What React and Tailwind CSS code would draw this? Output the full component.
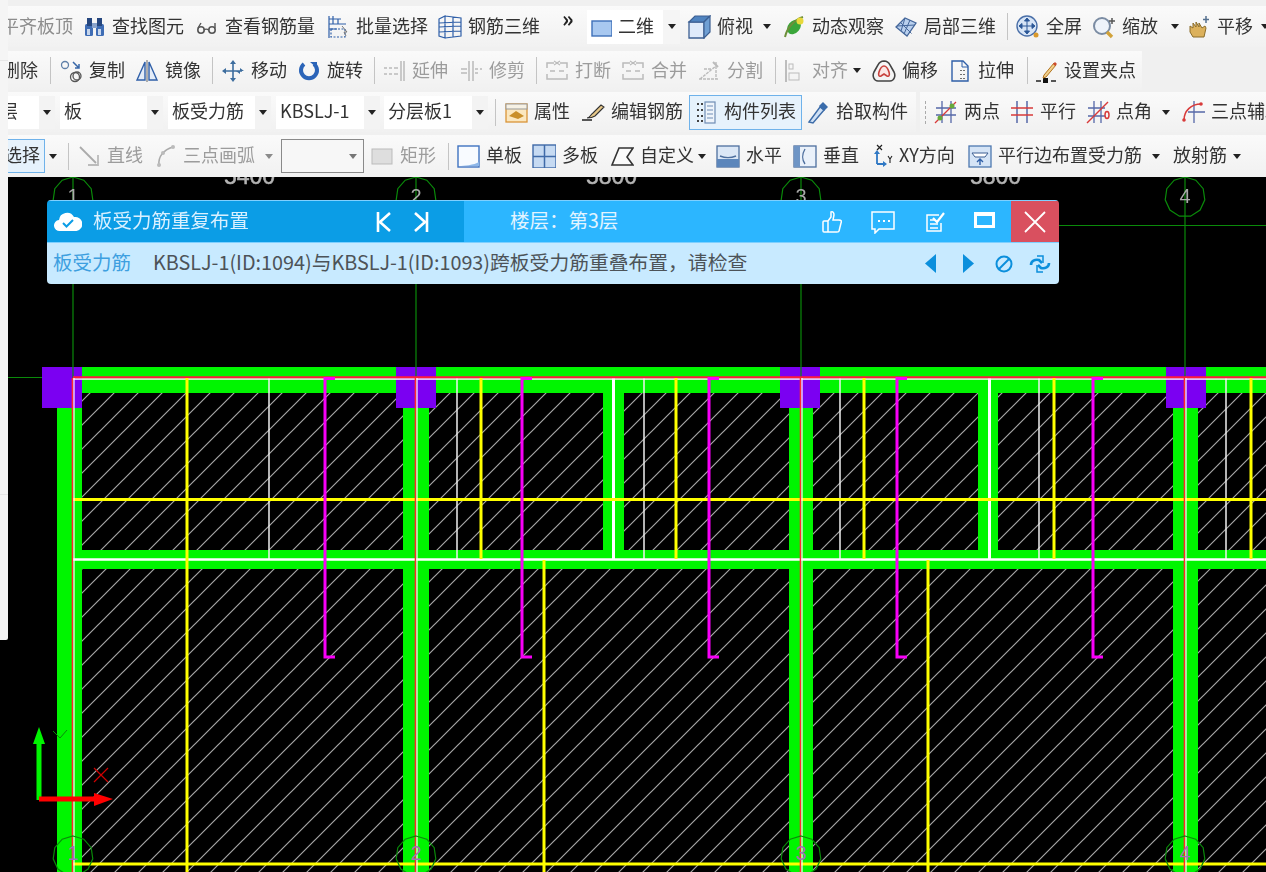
import React from "react";

const B = "#2f5fa8";
const S = ({ children }) => (
  <svg viewBox="0 0 24 24" className="w-6 h-6 shrink-0" fill="none">{children}</svg>
);

const I = {
  binoc: <S><rect x="3" y="9" width="8" height="12" rx="1.5" fill="#3f6db5" /><rect x="14" y="9" width="8" height="12" rx="1.5" fill="#3f6db5" /><rect x="5" y="3" width="5" height="8" fill="#26477f" /><rect x="15" y="3" width="5" height="8" fill="#26477f" /><rect x="10" y="8" width="5" height="5" fill="#8aa4cc" /><rect x="5" y="14" width="3" height="6" fill="#c7d6ec" /><rect x="16" y="14" width="3" height="6" fill="#c7d6ec" /></S>,
  glasses: <S><circle cx="6" cy="15" r="3.2" stroke="#555" strokeWidth="1.6" /><circle cx="17" cy="15" r="3.2" stroke="#555" strokeWidth="1.6" /><path d="M9 15c1-1 3-1 5 0M3 13 6 8M20 13V8" stroke="#555" strokeWidth="1.4" /></S>,
  batch: <S><path d="M3 1v22M3 4h12M3 9h17M3 14h8M7 1v8M12 4v5" stroke={B} strokeWidth="1.2" /><rect x="5" y="14" width="14" height="8" stroke={B} strokeWidth="1.2" strokeDasharray="2 1.5" /><path d="m16 11 5 6-3 0 2 4" stroke="#777" strokeWidth="1" /></S>,
  rebar3d: <S><path d="M1 4 7 1v22l-6-2V4ZM7 1l16 2v18L7 23M15 2v20M1 12l22-1M1 8l22-1M1 17l22-1" stroke={B} strokeWidth="1.2" /></S>,
  square2d: <S><rect x="4" y="6" width="20" height="15" fill="#a8c8f0" stroke="#3e6fb8" strokeWidth="1.4" /></S>,
  cube: <S><path d="M2 7h15v16H2z" fill="#dfeafa" stroke="#3c5f92" strokeWidth="1.3" /><path d="M2 7 8 1h15L17 7H2Z" fill="#4f83bf" stroke="#3c5f92" strokeWidth="1.2" /><path d="M17 7l6-6v16l-6 6V7Z" fill="#6f9fd4" stroke="#3c5f92" strokeWidth="1.2" /></S>,
  orbit: <S><ellipse cx="12" cy="12" rx="6" ry="8" transform="rotate(40 12 12)" fill="#3aa63a" /><path d="M3 22C5 13 12 5 21 2" stroke="#6d8f3a" strokeWidth="2" /><circle cx="18" cy="6" r="3.5" fill="#e8d83a" /></S>,
  local3d: <S><path d="m2 12 9-9 11 5-9 13L2 12Z" fill="#b9d0ee" stroke="#44669a" strokeWidth="1.3" /><path d="m6.500 7.500 11 11M11 3 7 16M16 5l-6 14M3 11l18-1" stroke="#44669a" strokeWidth="1" /></S>,
  full: <S><circle cx="11" cy="11" r="10" fill="#d6e4f6" stroke="#4a6fa8" strokeWidth="1.4" /><path d="M11 4v14M4 11h14M11 3 8.500 6h5L11 3Zm0 16-2.500-3h5L11 19ZM3 11l3-2.500v5L3 11Zm16 0-3-2.500v5l3-2.500Z" fill="#2b5797" stroke="#2b5797" strokeWidth="1" /><circle cx="20" cy="20" r="2.500" fill="#d9992c" /></S>,
  zoom: <S><circle cx="10" cy="11" r="8" fill="#eef3fa" stroke="#7b8ca3" strokeWidth="2" /><path d="m15 17 5 5" stroke="#d1a23a" strokeWidth="3.400" /><path d="M20 3v6M17 6h6" stroke="#555" strokeWidth="1.500" /></S>,
  pan: <S><path d="M3 17V11l3 2V8l3 4V7l3 5V8l3 5 3-2 1 2-2 9H6l-3-5Z" fill="#dcb15c" stroke="#8b6d2a" strokeWidth="1" /><path d="M19 1v7M16 4.500h6" stroke="#55708f" strokeWidth="1.500" /></S>,
  copy: <S><circle cx="6" cy="6" r="3.500" stroke="#5f7fa8" strokeWidth="1.300" /><circle cx="16" cy="18" r="4.500" stroke="#555" strokeWidth="1.300" /><circle cx="18" cy="17" r="4" stroke="#555" strokeWidth="1.300" /><path d="m14 3 6 6M20 5v4h-4" stroke="#3867a8" strokeWidth="1.500" /></S>,
  mirror: <S><path d="M10 3 2 21h8V3ZM14 3l8 18h-8V3Z" stroke={B} strokeWidth="1.400" fill="#e3ecf8" /><path d="M12 1v22" stroke="#666" strokeWidth="1" /></S>,
  move: <S><path d="M12 3v18M3 12h18" stroke="#3d6d9e" strokeWidth="1.600" /><path d="m12 1-3 4h6l-3-4Zm0 22-3-4h6l-3 4ZM1 12l4-3v6l-4-3Zm22 0-4-3v6l-4-3Z" fill="#3d6d9e" /></S>,
  rotate: <S><path d="M7 5a8 8 0 1 0 10 0" stroke="#2b64b8" strokeWidth="4" /><path d="M13 3h7v6" fill="#2b64b8" /></S>,
  extend: <S><path d="M2 9h3M7 9h3M12 9h4M2 15h3M7 15h3M12 15h4" stroke="#bbb" strokeWidth="1.500" /><path d="M19 2v20M22 2v20" stroke="#bbb" strokeWidth="1.500" /></S>,
  trim: <S><path d="M10 2v20M14 2v20" stroke="#bbb" strokeWidth="1.500" /><path d="M2 10h6M2 14h6M16 10h3M16 14h3M21 10h2" stroke="#bbb" strokeWidth="1.500" /></S>,
  brk: <S><path d="M2 9V4h7M22 9V4h-7M2 15v5h20v-5M5 12h5M14 12h5" stroke="#bbb" strokeWidth="1.500" /><path d="M9 2l3 2-3 2M15 2l-3 2 3 2" stroke="#bbb" strokeWidth="1.200" /></S>,
  split: <S><path d="M2 20h20M3 20 19 7M7 10h8M19 3v17" stroke="#bbb" strokeWidth="1.400" strokeDasharray="3 1" /><path d="m16 3 5 5" stroke="#bbb" strokeWidth="2" /></S>,
  align: <S><path d="M4 1v22" stroke="#aaa" strokeWidth="1.500" /><rect x="7" y="5" width="4" height="5" stroke="#bbb" /><rect x="7" y="14" width="10" height="7" stroke="#bbb" /></S>,
  offset: <S><path d="M12 2a7 7 0 0 1 6 4l4 7c2 4 0 9-4 9H6c-4 0-6-5-4-9l4-7a7 7 0 0 1 6-4Z" stroke="#444" strokeWidth="1.600" /><path d="M12 7c3 0 4 3 5 6s0 5-2 4l-3-2-3 2c-2 1-3-1-2-4s2-6 5-6Z" stroke="#c8413c" strokeWidth="1.600" fill="#fbe8e6" /></S>,
  stretch: <S><path d="M4 2h11l5 5v15H4V2Z" stroke={B} strokeWidth="1.400" /><path d="M14 2v6h6" stroke={B} strokeWidth="1" /><path d="M13 11v1M16 11v1M13 15v1M16 15v1M13 19v1M16 19v1" stroke="#444" strokeWidth="1.500" /></S>,
  grip: <S><path d="M2 22h5M17 22h5" stroke="#222" strokeWidth="1.500" /><rect x="9" y="19" width="5" height="5" fill="#111" /><path d="M10 16 20 4l2 2-10 12-3 1 1-3Z" fill="#f1d08c" stroke="#b2741f" strokeWidth="1" /><path d="m19 5 2-2 2 2-2 2" fill="#cc4b2e" /></S>,
  prop: <S><rect x="2" y="4" width="21" height="18" fill="#fbe7bf" stroke="#d99438" strokeWidth="1.300" /><rect x="2" y="4" width="21" height="5" fill="#f6f1e4" stroke="#999" strokeWidth="1" /><path d="m5 16 7-5 8 5-6 3-9-3Z" fill="#c98f2a" /></S>,
  editbar: <S><path d="M1 20h10" stroke="#222" strokeWidth="1.500" /><path d="M6 18c3 0 3-3 6-5l8-8 3 2-9 9c-3 2-5 2-8 2Z" fill="#e7c889" stroke="#333" strokeWidth="1.100" /></S>,
  list: <S><rect x="11" y="2" width="10" height="21" fill="#eef4fb" stroke="#6f8db5" strokeWidth="1.200" /><path d="M13 6h6M13 10h6M13 14h6M13 18h6" stroke="#6f8db5" /><path d="M3 4h2M7 4h2M3 10h2M7 10h2M3 16h2M7 16h2M3 21h2M7 21h2" stroke="#444" strokeWidth="1.800" /></S>,
  pick: <S><path d="M3 22 14 7l4 3L7 23l-4-1Z" fill="#cfe0f5" stroke="#3d6ca8" strokeWidth="1.400" /><path d="m13 6 4-4 5 5-4 4-5-5Z" fill="#3a6cab" /></S>,
  twopt: <S><path d="M8 1v22M17 1v22M2 8h20M2 15h20" stroke="#5668a8" strokeWidth="1.300" /><path d="M1 23 22 2" stroke="#d83a3a" strokeWidth="1.300" /><circle cx="6" cy="18" r="2.500" fill="#66a83a" /><circle cx="18" cy="6" r="2.500" fill="#66a83a" /></S>,
  parallel: <S><path d="M7 1v22M17 1v22" stroke="#5668a8" strokeWidth="1.500" /><path d="M1 8h22M1 15h22" stroke="#d83a3a" strokeWidth="1.500" /></S>,
  angle: <S><path d="M8 1v22M15 1v22M2 8h17M2 16h17" stroke="#5668a8" strokeWidth="1.300" /><path d="M1 23 22 2" stroke="#d83a3a" strokeWidth="1.500" /><ellipse cx="21" cy="15" rx="2" ry="3.500" stroke="#d83a3a" strokeWidth="1.500" /></S>,
  arc3: <S><path d="M13 1v22M7 12h17" stroke="#5668a8" strokeWidth="1.300" /><path d="M3 20C3 11 10 4 20 4" stroke="#d83a3a" strokeWidth="1.500" /><circle cx="3" cy="20" r="1.800" fill="#d83a3a" /><circle cx="20" cy="4" r="1.800" fill="#d83a3a" /></S>,
  line: <S><path d="m3 3 16 16" stroke="#aaa" strokeWidth="1.800" /><path d="M21 11v10H11" stroke="#bbb" strokeWidth="1.800" /></S>,
  arc: <S><path d="M6 21C5 13 10 6 20 3" stroke="#aaa" strokeWidth="1.600" /><circle cx="6" cy="21" r="2" fill="#bbb" /><circle cx="20" cy="3" r="2" fill="#bbb" /><circle cx="10" cy="9" r="2" fill="#bbb" /></S>,
  rect: <S><rect x="2" y="5" width="20" height="15" fill="#dedede" stroke="#bbb" /></S>,
  single: <S><rect x="2" y="2" width="21" height="21" fill="#f8fbff" stroke="#3f73c0" strokeWidth="1.400" /><path d="M3 22h20V18C18 21 8 22 3 22Z" fill="#8eb7e8" /></S>,
  multi: <S><rect x="1" y="1" width="23" height="23" fill="#c6daf2" stroke="#3f6aa8" strokeWidth="1.400" /><path d="M12.500 1v23M1 12.500h23" stroke="#3f6aa8" strokeWidth="1.500" /></S>,
  custom: <S><path d="M23 4H9L2 21h21l-6-8 6-9Z" stroke="#333" strokeWidth="1.600" fill="#fafafa" /></S>,
  horiz: <S><rect x="1" y="2" width="22" height="21" fill="#dbe7f6" stroke="#4e6f9e" strokeWidth="1.300" /><rect x="1" y="15" width="22" height="8" fill="#5c86bb" /><path d="M4 12c5 2 11 2 16 0" stroke="#4e6f9e" strokeWidth="1.400" /></S>,
  vert: <S><rect x="1" y="2" width="22" height="21" fill="#eaf1fa" stroke="#4e6f9e" strokeWidth="1.300" /><rect x="1" y="2" width="6" height="21" fill="#6f95c5" /><path d="M12 5C9 10 9 16 12 20" stroke="#4e6f9e" strokeWidth="1.400" /></S>,
  xy: <S><path d="M8 8v12M8 20h8" stroke="#2f78c4" strokeWidth="1.800" /><path d="m8 6-3 4h6L8 6Zm10 14-4-3v6l4-3Z" fill="#2f78c4" /><path d="m8 1 5 5M13 1 8 6" stroke="#222" strokeWidth="1.200" /><path d="m19 12 2 3 2-3M21 15v4" stroke="#222" strokeWidth="1.100" /></S>,
  paraEdge: <S><rect x="1" y="2" width="22" height="21" fill="#d5e4f6" stroke="#4e78b0" strokeWidth="1.300" /><path d="M4 9h16l-3 4H7L4 9Z" fill="#fff" stroke="#3d5f92" /><path d="M12 21v-6M9 18l3-3 3 3" stroke="#2f5fa8" strokeWidth="1.400" /></S>,
};

const Caret = ({ ml = "" }) => (
  <svg viewBox="0 0 8 5" className={`w-2 h-[5px] shrink-0 ${ml}`}><path d="M0 0h8L4 5z" fill="#222" /></svg>
);
const Sep = ({ ml }) => <div className={`w-px h-[27px] shrink-0 bg-[#c4c4c4] ${ml}`} />;

const T = ({ ml, icon, text, gray, tw = "" }) => (
  <div className={`flex items-center shrink-0 ${ml}`}>
    {icon}
    <span className={`ml-[6px] pb-[4px] shrink-0 ${tw} ${gray ? "text-[#9c9c9c]" : "text-[#333]"}`}>{text}</span>
  </div>
);

const Sel = ({ ml, w, text, clip }) => (
  <div className={`flex items-stretch h-[33px] bg-white shrink-0 overflow-hidden ${ml} ${w}`}>
    <span className={`flex-1 self-center pb-[4px] whitespace-nowrap text-[#333] ${clip ? "-ml-[8px]" : "ml-[4px]"}`}>{text}</span>
    <div className="w-[16px] bg-[#f3f3f3] flex items-center justify-center"><Caret /></div>
  </div>
);

const rowCls =
  "flex items-center overflow-hidden whitespace-nowrap text-[18px] leading-none bg-linear-to-b from-[#fafafa] to-[#f1f1f1]";

function Toolbar() {
  return (
    <div className="h-[177px] bg-[#f0f0f0] flex flex-col shrink-0 blur-[0.45px] font-['Noto_Sans_CJK_SC','Noto_Sans',sans-serif]">
      <div className={`${rowCls} mt-[6px] h-[41px]`}>
        <span className="-ml-[7px] pb-[4px] text-[#8d8d8d] shrink-0">平齐板顶</span>
        <T ml="ml-[9px]" icon={I.binoc} text="查找图元" />
        <T ml="ml-[11px]" icon={I.glasses} text="查看钢筋量" />
        <T ml="ml-[11px]" icon={I.batch} text="批量选择" />
        <T ml="ml-[10px]" icon={I.rebar3d} text="钢筋三维" />
        <span className="ml-[22px] w-[13px] shrink-0 -mt-[20px] text-[22px] font-bold text-[#222]">»</span>
        <div className="ml-[12px] w-[93px] h-[34px] shrink-0 bg-white flex items-center">
          <div className="ml-px">{I.square2d}</div>
          <span className="ml-[6px] pb-[4px] text-[#333]">二维</span>
          <div className="ml-[9px] w-[18px] h-full bg-[#f5f5f5] flex items-center justify-center"><Caret /></div>
        </div>
        <T ml="ml-[7px]" icon={I.cube} text="俯视" />
        <Caret ml="ml-[10px]" />
        <T ml="ml-[11px]" icon={I.orbit} text="动态观察" />
        <T ml="ml-[10px]" icon={I.local3d} text="局部三维" />
        <Sep ml="ml-[11px]" />
        <T ml="ml-[8px]" icon={I.full} text="全屏" />
        <T ml="ml-[10px]" icon={I.zoom} text="缩放" />
        <Caret ml="ml-[13px]" />
        <T ml="ml-[8px]" icon={I.pan} text="平移" />
        <Caret ml="ml-[8px]" />
      </div>

      <div className={`${rowCls} mt-[4px] h-[39px] w-[1134px]`}>
        <span className="-ml-[6px] pb-[4px] text-[#333] shrink-0">删除</span>
        <Sep ml="ml-[12px]" />
        <T ml="ml-[8px]" icon={I.copy} text="复制" />
        <T ml="ml-[10px]" icon={I.mirror} text="镜像" />
        <Sep ml="ml-[11px]" />
        <T ml="ml-[8px]" icon={I.move} text="移动" />
        <T ml="ml-[10px]" icon={I.rotate} text="旋转" />
        <Sep ml="ml-[11px]" />
        <T ml="ml-[7px]" icon={I.extend} text="延伸" gray />
        <T ml="ml-[11px]" icon={I.trim} text="修剪" gray />
        <Sep ml="ml-[11px]" />
        <T ml="ml-[8px]" icon={I.brk} text="打断" gray />
        <T ml="ml-[10px]" icon={I.brk} text="合并" gray />
        <T ml="ml-[10px]" icon={I.split} text="分割" gray />
        <Sep ml="ml-[12px]" />
        <T ml="ml-[6px]" icon={I.align} text="对齐" gray />
        <Caret ml="ml-[5px]" />
        <T ml="ml-[11px]" icon={I.offset} text="偏移" />
        <T ml="ml-[10px]" icon={I.stretch} text="拉伸" />
        <Sep ml="ml-[13px]" />
        <T ml="ml-[6px]" icon={I.grip} text="设置夹点" />
      </div>

      <div className={`${rowCls} mt-[2px] h-[40px]`}>
        <Sel ml="" w="w-[47px]" text="层" clip />
        <Sel ml="ml-[5px]" w="w-[103px]" text="板" />
        <Sel ml="ml-[5px]" w="w-[103px]" text="板受力筋" />
        <Sel ml="ml-[5px]" w="w-[104px]" text="KBSLJ-1" />
        <Sel ml="ml-[4px]" w="w-[104px]" text="分层板1" />
        <Sep ml="ml-[7px]" />
        <T ml="ml-[8px]" icon={I.prop} text="属性" />
        <T ml="ml-[11px]" icon={I.editbar} text="编辑钢筋" />
        <div className="ml-[6px] w-[113px] h-[35px] shrink-0 flex items-center border border-[#6fb2ea] bg-[#e6f2fc]">
          <div className="ml-[4px]">{I.list}</div>
          <span className="ml-[6px] pb-[4px] text-[#333]">构件列表</span>
        </div>
        <T ml="ml-[4px]" icon={I.pick} text="拾取构件" />
        <div className="ml-[8px] w-[4px] h-full bg-[#f0f0f0] shrink-0" />
        <div className="ml-[4px] w-[3px] h-[24px] shrink-0 bg-[radial-gradient(#aaa_1px,transparent_1px)] bg-[length:3px_5px]" />
        <T ml="ml-[7px]" icon={I.twopt} text="两点" />
        <T ml="ml-[10px]" icon={I.parallel} text="平行" />
        <T ml="ml-[10px]" icon={I.angle} text="点角" />
        <Caret ml="ml-[10px]" />
        <T ml="ml-[11px]" icon={I.arc3} text="三点辅助" />
      </div>

      <div className={`${rowCls} mt-[3px] h-[42px]`}>
        <div className="w-[37px] h-[34px] shrink-0 border border-[#6fb2ea] border-l-0 bg-[#e6f2fc] flex items-center">
          <span className="-ml-[4px] pb-[4px] shrink-0 text-[#333]">选择</span>
        </div>
        <Caret ml="ml-[4px]" />
        <Sep ml="ml-[11px]" />
        <T ml="ml-[8px]" icon={I.line} text="直线" gray />
        <T ml="ml-[10px]" icon={I.arc} text="三点画弧" gray />
        <Caret ml="ml-[10px] opacity-50" />
        <div className="ml-[8px] w-[83px] h-[34px] shrink-0 border border-[#8a8a8a] bg-[#f7f7f7] flex items-center justify-end pr-[6px]"><Caret ml="opacity-60" /></div>
        <T ml="ml-[6px]" icon={I.rect} text="矩形" gray />
        <Sep ml="ml-[12px]" />
        <T ml="ml-[7px]" icon={I.single} text="单板" />
        <T ml="ml-[10px]" icon={I.multi} text="多板" />
        <T ml="ml-[12px]" icon={I.custom} text="自定义" />
        <Caret ml="ml-[4px]" />
        <T ml="ml-[10px]" icon={I.horiz} text="水平" />
        <T ml="ml-[11px]" icon={I.vert} text="垂直" />
        <T ml="ml-[10px]" icon={I.xy} text="XY方向" tw="w-[58px]" />
        <T ml="ml-[11px]" icon={I.paraEdge} text="平行边布置受力筋" />
        <Caret ml="ml-[10px]" />
        <span className="ml-[13px] pb-[4px] text-[#333] shrink-0">放射筋</span>
        <Caret ml="ml-[6px]" />
      </div>
    </div>
  );
}

const axes = [73, 416, 801, 1185];
const purple = [42, 396, 780, 1166];
const cols = [[57, 82], [403, 429], [789, 813], [1173, 1198]];
const secondary = [[603, 624, 613], [978, 998, 989]];
const thinWhite = [269, 457, 644, 840, 1039, 1226];
const yellowShort = [481, 676, 864, 1054, 1251];
const yellowLow = [544, 928];
const magenta = [325, 522, 709, 897, 1093];
const GREEN = "#00f500";
const AXIS = "#0a8a0a";
const poly = (cx, cy, r) =>
  Array.from({ length: 11 }, (_, i) => {
    const a = (i / 11) * Math.PI * 2 - Math.PI / 2;
    return `${(cx + r * Math.cos(a)).toFixed(1)},${(cy + r * Math.sin(a)).toFixed(1)}`;
  }).join(" ");

function Canvas() {
  return (
    <svg viewBox="8 177 1258 695" className="w-[1258px] h-[695px] shrink-0 blur-[0.3px]">
      <defs>
        <pattern id="hatch" width="24" height="24" patternUnits="userSpaceOnUse" patternTransform="translate(3 0)">
          <path d="M-2 26 26-2M-2 2 2-2M22 26l4-4" stroke="#a6a6a6" strokeWidth="1.200" />
        </pattern>
      </defs>
      <rect x="0" y="177" width="1266" height="695" fill="#000" />
      <rect x="82" y="393" width="1184" height="479" fill="url(#hatch)" />
      {[[224, "5400"], [586, "5800"], [970, "5800"]].map(([x, t], i) => (
        <text key={i} x={x} y="184" fontFamily="'Liberation Sans',sans-serif" fontSize="23" fill="#b5b5b5" stroke="#b5b5b5" strokeWidth="0.5">{t}</text>
      ))}
      {axes.map((x, i) => (
        <g key={x}>
          <path d={`M${x} 177V378`} stroke={AXIS} strokeWidth="1.200" />
          <polygon points={poly(x, 197, 20)} fill="none" stroke={AXIS} strokeWidth="1.200" />
          <text x={x} y="203" textAnchor="middle" fontFamily="'Liberation Sans',sans-serif" fontSize="20" fill="#aaa">{i + 1}</text>
        </g>
      ))}
      <path d="M8 377.500H73M1059 225.500H1266" stroke={AXIS} strokeWidth="1.200" />
      <rect x="73" y="367" width="1193" height="26" fill={GREEN} />
      <rect x="73" y="550" width="1193" height="19" fill={GREEN} />
      {cols.map(([a, b]) => <rect key={a} x={a} y="393" width={b - a} height="479" fill={GREEN} />)}
      {secondary.map(([a, b]) => <rect key={a} x={a} y="393" width={b - a} height="157" fill={GREEN} />)}
      {purple.map((x) => <rect key={x} x={x} y="367" width="40" height="41" fill="#7b00f2" />)}
      <path d="M73 367V378M416 367V378M801 367V378M1185 367V378" stroke={AXIS} strokeWidth="1.200" />
      {thinWhite.map((x) => <path key={x} d={`M${x} 378V559`} stroke="#f0f0f0" strokeWidth="1.500" />)}
      {secondary.map(([, , w]) => <rect key={w} x={w - 1} y="378" width="3" height="182" fill="#fff" />)}
      <path d="M73 379H1266" stroke="#fff" strokeWidth="1.500" />
      <path d="M73 559.500H1266" stroke="#fff" strokeWidth="2.500" />
      <path d="M73 377.200H1266" stroke="#ff1a3c" strokeWidth="2" />
      {yellowShort.map((x) => <path key={x} d={`M${x} 378V559`} stroke="#ffff00" strokeWidth="3" />)}
      {yellowLow.map((x) => <path key={x} d={`M${x} 560V872`} stroke="#ffff00" strokeWidth="3" />)}
      <path d="M187 378V872" stroke="#ffff00" strokeWidth="3" />
      <path d="M73 499.500H1266M73 864H1266" stroke="#ffff00" strokeWidth="3" />
      {magenta.map((x) => (
        <path key={x} d={`M${x + 10} 378.500H${x}V657H${x + 10}`} fill="none" stroke="#f800f8" strokeWidth="3" />
      ))}
      {axes.map((x) => (
        <g key={x}>
          <path d={`M${x - 0.5} 378V872`} stroke="#ff2a2a" strokeWidth="1.600" />
          <path d={`M${x + 1} 378V872`} stroke="#fff" strokeWidth="1.200" />
        </g>
      ))}
      {axes.map((x, i) => (
        <g key={x}>
          <polygon points={poly(x, 856, 20)} fill="none" stroke={AXIS} strokeWidth="1.200" />
          <text x={x} y="860" textAnchor="middle" fontFamily="'Liberation Sans',sans-serif" fontSize="20" fill="#a070b8">{i + 1}</text>
        </g>
      ))}
      <path d="M36.500 800V744H33l6-17 6 17h-3.500v56Z" fill={GREEN} />
      <path d="M39 796.500h55V793l19 6-19 7v-4.500H39Z" fill="#ff0000" />
      <path d="m53 731 7 7 7-8" stroke={AXIS} fill="none" />
      <path d="m94 768 14 14M108 768 94 782" stroke="#d00000" strokeWidth="1.200" />
    </svg>
  );
}

function Dialog() {
  return (
    <div className="absolute left-[47px] top-[200px] w-[1012px] h-[84px] rounded-[4px] overflow-hidden flex flex-col blur-[0.35px] font-['Noto_Sans_CJK_SC','Noto_Sans',sans-serif] text-[19.5px] leading-none whitespace-nowrap">
      <div className="h-[43px] flex items-stretch border-t border-[#7fd0ff] border-b border-b-[#7fd0ff] shrink-0">
        <div className="w-[418px] bg-[#0b9de6] flex items-center">
          <svg viewBox="0 0 28 20" className="ml-[7px] w-[28px] h-[20px] shrink-0">
            <path d="M6 19a5.500 5.500 0 0 1-1-11 8 8 0 0 1 15-3 6 6 0 0 1 2.500 14H6Z" fill="#fff" />
            <path d="m9 11 3.500 3.500L19 8" stroke="#0b9de6" strokeWidth="2" fill="none" />
          </svg>
          <span className="ml-[11px] w-[156px] pb-[4px] text-[#d9f0ff]">板受力筋重复布置</span>
          <svg viewBox="0 0 16 20" className="ml-[127px] w-4 h-5 shrink-0"><path d="M2 0v20M14 1 4 10l10 9" stroke="#fff" strokeWidth="2.600" fill="none" /></svg>
          <svg viewBox="0 0 16 20" className="ml-[21px] w-4 h-5 shrink-0"><path d="M14 0v20M2 1l10 9L2 19" stroke="#fff" strokeWidth="2.600" fill="none" /></svg>
        </div>
        <div className="flex-1 bg-[#2cb6ff] flex items-center">
          <span className="ml-[46px] w-[110px] pb-[4px] text-[19.5px] text-[#e2f4ff]">楼层：第3层</span>
          <svg viewBox="0 0 20 24" className="ml-[202px] w-5 h-6 shrink-0"><path d="M2 11h4v11H2a1 1 0 0 1-1-1v-9a1 1 0 0 1 1-1Zm4 0 3-4V2c2-1 3 1 3 3l-1 5h6c2 0 3 1 2 3l-2 8c0 1-1 1-2 1H6" stroke="#fff" strokeWidth="1.500" fill="none" /></svg>
          <svg viewBox="0 0 26 24" className="ml-[28px] w-[26px] h-6 shrink-0"><path d="M2 2h22v17H9l-4 4v-4H2V2Z" stroke="#fff" strokeWidth="1.500" fill="none" /><path d="M8 11h2M13 11h2M18 11h2" stroke="#fff" strokeWidth="2" /></svg>
          <svg viewBox="0 0 22 22" className="ml-[28px] w-[22px] h-[22px] shrink-0"><path d="M15 4H3v16h14v-8" stroke="#fff" strokeWidth="1.500" fill="none" /><path d="M6 9h5M6 13h8M6 17h8" stroke="#fff" strokeWidth="1.500" /><path d="m9 7 4 4 7-9" stroke="#fff" strokeWidth="2.200" fill="none" /></svg>
          <div className="ml-[28px] -mt-[4px] w-[21px] h-[16px] border-[3px] border-t-[4px] border-white shrink-0" />
          <div className="ml-[16px] w-[48px] self-stretch bg-[#d9505f] flex items-center justify-center shrink-0">
            <svg viewBox="0 0 22 22" className="w-[22px] h-[22px]"><path d="m1 1 20 20M21 1 1 21" stroke="#fff" strokeWidth="1.800" /></svg>
          </div>
        </div>
      </div>
      <div className="flex-1 bg-[#c8eaff] flex items-center">
        <span className="ml-[6px] w-[78px] pb-[4px] text-[#3d9fe0]">板受力筋</span>
        <span className="ml-[22px] w-[595px] pb-[4px] text-[19.8px] text-[#4d5358]">KBSLJ-1(ID:1094)与KBSLJ-1(ID:1093)跨板受力筋重叠布置，请检查</span>
        <svg viewBox="0 0 11 19" className="ml-[177px] w-[11px] h-[19px] shrink-0"><path d="M11 0v19L0 9.500Z" fill="#0b8fdc" /></svg>
        <svg viewBox="0 0 11 19" className="ml-[27px] w-[11px] h-[19px] shrink-0"><path d="M0 0v19l11-9.500Z" fill="#0b8fdc" /></svg>
        <svg viewBox="0 0 18 18" className="ml-[21px] w-[18px] h-[18px] shrink-0"><circle cx="9" cy="9" r="7.500" stroke="#0b8fdc" strokeWidth="2" fill="none" /><path d="m4 14 10-10" stroke="#0b8fdc" strokeWidth="2" /></svg>
        <svg viewBox="0 0 22 18" className="ml-[16px] w-[22px] h-[18px] shrink-0"><path d="M2 10c0-4 4-6 8-5l3 3M20 8c0 4-4 6-8 5l-3-3" stroke="#0b8fdc" strokeWidth="2.600" fill="none" /><path d="M8 1h6v7M14 17H8v-7" stroke="#0b8fdc" strokeWidth="1.500" fill="none" /></svg>
      </div>
    </div>
  );
}

export default function App() {
  return (
    <div className="relative w-[1266px] h-[872px] overflow-hidden bg-black flex">
      <div className="w-[8px] h-[640px] shrink-0 bg-[#f5f5f5] rounded-br-[2px] flex flex-col">
        <div className="h-[61px] border-b border-[#e6e6e6]" />
        <div className="h-[434px] border-b border-[#e6e6e6]" />
      </div>
      <div className="w-[1258px] shrink-0 flex flex-col">
        <Toolbar />
        <Canvas />
      </div>
      <Dialog />
    </div>
  );
}
